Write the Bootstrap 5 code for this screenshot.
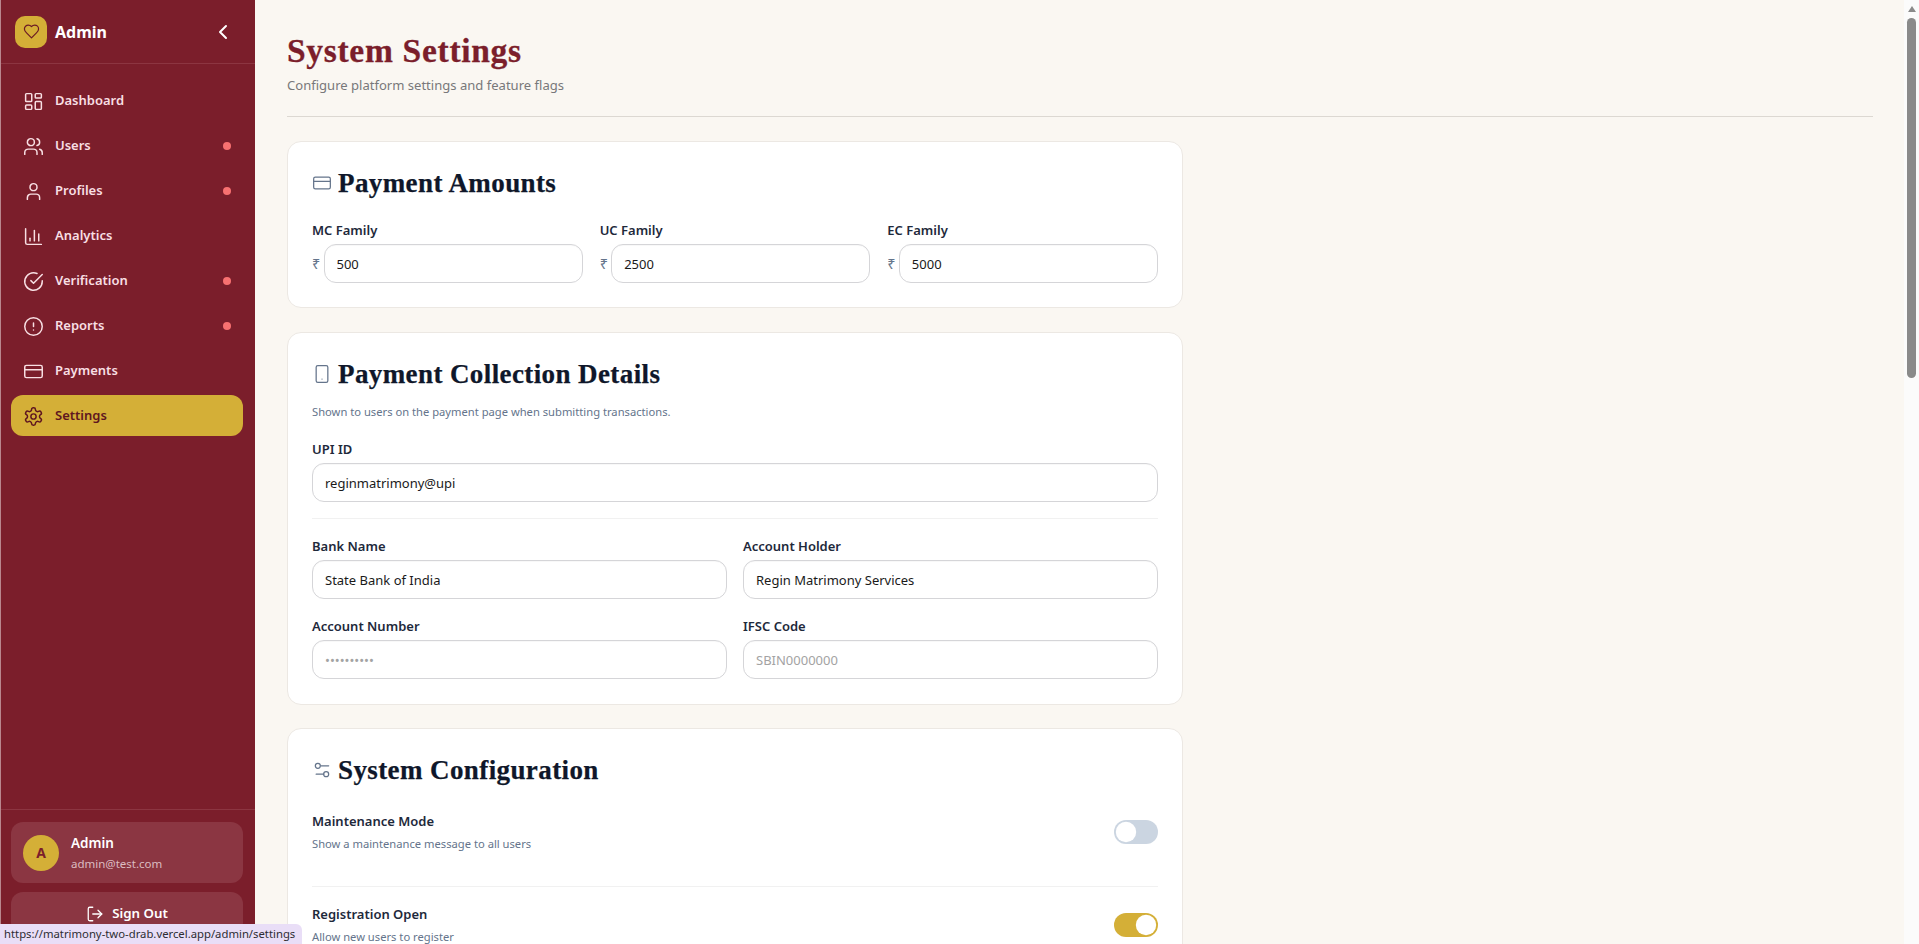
<!DOCTYPE html>
<html lang="en">
<head>
<meta charset="utf-8">
<title>System Settings</title>
<link href="https://cdn.jsdelivr.net/npm/bootstrap@5.3.0/dist/css/bootstrap.min.css" rel="stylesheet">
<style>
html,body{height:100%;overflow:hidden}
body{font-family:"Noto Sans","Liberation Sans",sans-serif;background:#faf7f2;color:#0f172a;font-size:14px}
svg.ic{fill:none;stroke:currentColor;stroke-width:1.7;stroke-linecap:round;stroke-linejoin:round;flex:none}
.shell{height:944px}
.side{width:255px;flex:none;background:#7b1e2b;border-left:1px solid #b9878e;color:#fff}
.side-head{height:64px;padding:0 14px;border-bottom:1px solid #8c3541}
.logo{width:32px;height:32px;border-radius:10px;background:#d4af37;color:#6b1a25}
.brand{font-weight:700;font-size:16px;line-height:1}
svg.ic.collapse-btn{color:#fff;margin-right:6px;stroke-width:2}
.side-nav{padding:16px 12px 0 10px;gap:4px}
.side-nav .nav-link{height:41px;padding:1px 12px 0 11.5px;border-radius:12px;color:#f8dfe3;font-weight:600;font-size:13px;gap:11.5px}
.side-nav .nav-link.active{background:#d4af37;color:#5f1620}
.dot-alert{width:8px;height:8px;border-radius:50%;background:#f87171;margin-left:auto}
.side-foot{border-top:1px solid #8c3541;padding:12px 12px 0 10px;height:135px}
.user-box{height:61px;border-radius:12px;background:#8b3642;padding:0 12px;gap:12px}
.avatar{width:36px;height:36px;border-radius:50%;background:#d4af37;color:#7b1e2b;font-weight:700;font-size:14px}
.u-name{font-size:13.5px;font-weight:600;line-height:1.4;margin-top:1px}
.u-mail{font-size:11.5px;color:#dcbcc1;line-height:1.4;margin-top:3px}
.out-btn{height:43px;border-radius:12px;background:#8b3642;border:0;color:#fff;font-weight:600;font-size:13.3px;margin-top:9px;gap:8px;padding-bottom:6px}
.main-area{padding:31px 31px 0 32px;overflow:hidden;min-width:0}
.ttl{font-family:"Liberation Serif",serif;font-weight:700;font-size:33.5px;letter-spacing:.7px;-webkit-text-stroke:.3px #7b1e2b;color:#7b1e2b;line-height:40px;margin:0}
.sub-ttl{color:#78787a;font-size:13.05px;line-height:20px;margin-top:4px}
.rule{margin:21px 0 24px;border:0;border-top:1px solid #dcd8d2;opacity:1}
.panel{width:896px;border:1px solid #ece8e3;border-radius:14px;background:#fff;padding:25px 24px 25px;margin-bottom:24px;box-shadow:none}
.panel-first{padding-bottom:24px}
.panel-mid{margin-bottom:23px}
.panel-h{font-family:"Liberation Serif",serif;font-weight:700;font-size:27px;letter-spacing:.4px;-webkit-text-stroke:.25px #0f172a;line-height:32px;color:#0f172a;margin:0;gap:6px}
.panel-h svg.ic{color:#64748b;stroke-width:1.5;-webkit-text-stroke:0}
.flab{font-weight:600;font-size:13px;color:#1e293b;line-height:20px;margin-bottom:4px}
.fc{height:39px;border-radius:12px;border:1px solid #d5d5d8;font-size:13px;padding:0 12px;color:#1a1a1a;box-shadow:inset 0 1px 1px rgba(0,0,0,.03)}
.fc::placeholder{color:#a3a3a3}
.rupee{color:#64748b;font-size:14.5px;width:11.5px;flex:none}
.tri{display:grid;grid-template-columns:repeat(3,1fr);gap:17px;margin-top:21px}
.duo{display:grid;grid-template-columns:1fr 1fr;gap:17px 16px}
.note{font-size:11.2px;color:#64748b;line-height:16px;margin:14px 0 19px}
.thin{margin:16px 0 17px;border:0;border-top:1px solid #f1f1f1;opacity:1}
.cfg-l{font-weight:600;font-size:13px;color:#1e293b;line-height:20px}
.cfg-s{font-size:11.2px;color:#64748b;line-height:16px;margin-top:5px}
.cfg-first{margin-top:25px}
.thin-wide{margin-top:34px}
.form-switch.sw{padding:0;margin:0;min-height:0;line-height:0}
.form-switch.sw .form-check-input{width:44px;height:24px;margin:0;float:none;border:0;background-color:#cbd5e1;--bs-form-switch-bg:url("data:image/svg+xml,%3csvg xmlns='http://www.w3.org/2000/svg' viewBox='-4 -4 8 8'%3e%3ccircle r='3.4' fill='%23fff'/%3e%3c/svg%3e")}
.form-switch.sw .form-check-input:checked{background-color:#d4af37}
.fake-bar{width:15px;flex:none;background:#fbfbfb;padding:0 3px}
.fake-arrow{width:0;height:0;border-left:4.5px solid transparent;border-right:4.5px solid transparent;border-bottom:6px solid #8a8a8a;margin:6px auto 0 auto}
.fake-thumb{width:9px;height:360px;background:#8a8a8a;border-radius:5px;margin-top:6px}
.link-tip{position:fixed;left:0;bottom:0;height:20px;width:302px;background:#e9def7;border-top-right-radius:6px;font-size:11.3px;line-height:20px;padding-left:4px;color:#2d2d33;white-space:nowrap}
</style>
</head>
<body>
<svg width="0" height="0" class="position-absolute">
<defs>
<symbol id="i-dash" viewBox="0 0 24 24"><rect x="3" y="3" width="7" height="9" rx="1"/><rect x="14" y="3" width="7" height="5" rx="1"/><rect x="14" y="12" width="7" height="9" rx="1"/><rect x="3" y="16" width="7" height="5" rx="1"/></symbol>
<symbol id="i-users" viewBox="0 0 24 24"><path d="M16 21v-2a4 4 0 0 0-4-4H6a4 4 0 0 0-4 4v2"/><circle cx="9" cy="7" r="4"/><path d="M22 21v-2a4 4 0 0 0-3-3.87"/><path d="M16 3.13a4 4 0 0 1 0 7.75"/></symbol>
<symbol id="i-user" viewBox="0 0 24 24"><path d="M19 21v-2a4 4 0 0 0-4-4H9a4 4 0 0 0-4 4v2"/><circle cx="12" cy="7" r="4"/></symbol>
<symbol id="i-chart" viewBox="0 0 24 24"><path d="M3 3v16a2 2 0 0 0 2 2h16"/><path d="M18 17V9"/><path d="M13 17V5"/><path d="M8 17v-3"/></symbol>
<symbol id="i-check" viewBox="0 0 24 24"><path d="M22 11.08V12a10 10 0 1 1-5.93-9.14"/><path d="M22 4 12 14.01l-3-3"/></symbol>
<symbol id="i-alert" viewBox="0 0 24 24"><circle cx="12" cy="12" r="10"/><path d="M12 8v4"/><path d="M12 16h.01"/></symbol>
<symbol id="i-card" viewBox="0 0 24 24"><rect x="2" y="5" width="20" height="14" rx="2"/><path d="M2 10h20"/></symbol>
<symbol id="i-gear" viewBox="0 0 24 24"><path d="M12.22 2h-.44a2 2 0 0 0-2 2v.18a2 2 0 0 1-1 1.73l-.43.25a2 2 0 0 1-2 0l-.15-.08a2 2 0 0 0-2.73.73l-.22.38a2 2 0 0 0 .73 2.73l.15.1a2 2 0 0 1 1 1.72v.51a2 2 0 0 1-1 1.74l-.15.09a2 2 0 0 0-.73 2.73l.22.38a2 2 0 0 0 2.73.73l.15-.08a2 2 0 0 1 2 0l.43.25a2 2 0 0 1 1 1.73V20a2 2 0 0 0 2 2h.44a2 2 0 0 0 2-2v-.18a2 2 0 0 1 1-1.73l.43-.25a2 2 0 0 1 2 0l.15.08a2 2 0 0 0 2.73-.73l.22-.39a2 2 0 0 0-.73-2.73l-.15-.08a2 2 0 0 1-1-1.74v-.5a2 2 0 0 1 1-1.74l.15-.09a2 2 0 0 0 .73-2.73l-.22-.38a2 2 0 0 0-2.73-.73l-.15.08a2 2 0 0 1-2 0l-.43-.25a2 2 0 0 1-1-1.73V4a2 2 0 0 0-2-2z"/><circle cx="12" cy="12" r="3"/></symbol>
<symbol id="i-heart" viewBox="0 0 24 24"><path d="M19 14c1.49-1.46 3-3.21 3-5.5A5.5 5.5 0 0 0 16.5 3c-1.76 0-3 .5-4.5 2-1.5-1.5-2.74-2-4.5-2A5.5 5.5 0 0 0 2 8.5c0 2.3 1.5 4.05 3 5.5l7 7Z"/></symbol>
<symbol id="i-out" viewBox="0 0 24 24"><path d="M9 21H5a2 2 0 0 1-2-2V5a2 2 0 0 1 2-2h4"/><path d="m16 17 5-5-5-5"/><path d="M21 12H9"/></symbol>
<symbol id="i-phone" viewBox="0 0 24 24"><rect x="5" y="2" width="14" height="20" rx="2"/><path d="M12 18h.01"/></symbol>
<symbol id="i-tune" viewBox="0 0 24 24"><path d="M20 7h-9"/><path d="M14 17H5"/><circle cx="17" cy="17" r="3"/><circle cx="7" cy="7" r="3"/></symbol>
</defs>
</svg>
<div class="d-flex shell">
  <aside class="side d-flex flex-column">
    <div class="side-head d-flex align-items-center">
      <span class="logo d-flex align-items-center justify-content-center"><svg class="ic" width="17" height="17"><use href="#i-heart"/></svg></span>
      <span class="brand ms-2">Admin</span>
      <svg class="ic collapse-btn ms-auto" width="24" height="24" viewBox="0 0 24 24"><path d="m15 18-6-6 6-6"/></svg>
    </div>
    <nav class="nav flex-column side-nav flex-grow-1">
      <a class="nav-link d-flex align-items-center" href="#"><svg class="ic" width="21" height="21"><use href="#i-dash"/></svg>Dashboard</a>
      <a class="nav-link d-flex align-items-center" href="#"><svg class="ic" width="21" height="21"><use href="#i-users"/></svg>Users<span class="dot-alert"></span></a>
      <a class="nav-link d-flex align-items-center" href="#"><svg class="ic" width="21" height="21"><use href="#i-user"/></svg>Profiles<span class="dot-alert"></span></a>
      <a class="nav-link d-flex align-items-center" href="#"><svg class="ic" width="21" height="21"><use href="#i-chart"/></svg>Analytics</a>
      <a class="nav-link d-flex align-items-center" href="#"><svg class="ic" width="21" height="21"><use href="#i-check"/></svg>Verification<span class="dot-alert"></span></a>
      <a class="nav-link d-flex align-items-center" href="#"><svg class="ic" width="21" height="21"><use href="#i-alert"/></svg>Reports<span class="dot-alert"></span></a>
      <a class="nav-link d-flex align-items-center" href="#"><svg class="ic" width="21" height="21"><use href="#i-card"/></svg>Payments</a>
      <a class="nav-link active d-flex align-items-center" href="#"><svg class="ic" width="21" height="21"><use href="#i-gear"/></svg>Settings</a>
    </nav>
    <div class="side-foot">
      <div class="user-box d-flex align-items-center">
        <span class="avatar d-flex align-items-center justify-content-center">A</span>
        <div><div class="u-name">Admin</div><div class="u-mail">admin@test.com</div></div>
      </div>
      <button class="btn out-btn w-100 d-flex align-items-center justify-content-center"><svg class="ic" width="18" height="18"><use href="#i-out"/></svg>Sign Out</button>
    </div>
  </aside>
  <main class="main-area flex-grow-1">
    <h1 class="ttl">System Settings</h1>
    <div class="sub-ttl">Configure platform settings and feature flags</div>
    <hr class="rule">
    <section class="card panel panel-first">
      <h2 class="panel-h d-flex align-items-center"><svg class="ic" width="20" height="20"><use href="#i-card"/></svg>Payment Amounts</h2>
      <div class="tri">
        <div><label class="form-label flab d-block">MC Family</label><div class="d-flex align-items-center"><span class="rupee">₹</span><input class="form-control fc" value="500"></div></div>
        <div><label class="form-label flab d-block">UC Family</label><div class="d-flex align-items-center"><span class="rupee">₹</span><input class="form-control fc" value="2500"></div></div>
        <div><label class="form-label flab d-block">EC Family</label><div class="d-flex align-items-center"><span class="rupee">₹</span><input class="form-control fc" value="5000"></div></div>
      </div>
    </section>
    <section class="card panel panel-mid">
      <h2 class="panel-h d-flex align-items-center"><svg class="ic" width="20" height="20"><use href="#i-phone"/></svg>Payment Collection Details</h2>
      <p class="note">Shown to users on the payment page when submitting transactions.</p>
      <label class="form-label flab d-block">UPI ID</label>
      <input class="form-control fc" value="reginmatrimony@upi">
      <hr class="thin">
      <div class="duo">
        <div><label class="form-label flab d-block">Bank Name</label><input class="form-control fc" value="State Bank of India"></div>
        <div><label class="form-label flab d-block">Account Holder</label><input class="form-control fc" value="Regin Matrimony Services"></div>
        <div><label class="form-label flab d-block">Account Number</label><input class="form-control fc" placeholder="••••••••••"></div>
        <div><label class="form-label flab d-block">IFSC Code</label><input class="form-control fc" placeholder="SBIN0000000"></div>
      </div>
    </section>
    <section class="card panel">
      <h2 class="panel-h d-flex align-items-center"><svg class="ic" width="20" height="20"><use href="#i-tune"/></svg>System Configuration</h2>
      <div class="d-flex justify-content-between align-items-center cfg-first">
        <div><div class="cfg-l">Maintenance Mode</div><div class="cfg-s">Show a maintenance message to all users</div></div>
        <div class="form-check form-switch sw"><input class="form-check-input" type="checkbox" role="switch" aria-label="Maintenance Mode"></div>
      </div>
      <hr class="thin thin-wide">
      <div class="d-flex justify-content-between align-items-center">
        <div><div class="cfg-l">Registration Open</div><div class="cfg-s">Allow new users to register</div></div>
        <div class="form-check form-switch sw"><input class="form-check-input" type="checkbox" role="switch" checked aria-label="Registration Open"></div>
      </div>
    </section>
  </main>
  <div class="fake-bar"><div class="fake-arrow"></div><div class="fake-thumb"></div></div>
</div>
<div class="link-tip">https://matrimony-two-drab.vercel.app/admin/settings</div>
<script src="https://cdn.jsdelivr.net/npm/bootstrap@5.3.0/dist/js/bootstrap.bundle.min.js"></script>
</body>
</html>
